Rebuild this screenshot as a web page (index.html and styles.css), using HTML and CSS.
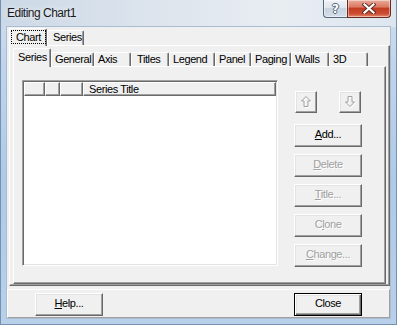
FILE: index.html
```html
<!DOCTYPE html>
<html lang="en">
<head>
<meta charset="utf-8">
<title>Editing Chart1</title>
<link rel="stylesheet" href="styles.css">
</head>
<body>
<div class="window">
  <div class="titlebar">
    <span class="title">Editing Chart1</span>
    <div class="capbtns">
      <div class="cap cap-help"><span class="qmark">?</span></div>
      <div class="cap cap-close">
        <svg width="14" height="11" viewBox="0 0 14 11" aria-hidden="true">
          <path d="M2.5 1.5 L11.5 9.5 M11.5 1.5 L2.5 9.5" stroke="#5a2a20" stroke-width="4" stroke-linecap="square" fill="none"/>
          <path d="M2.5 1.5 L11.5 9.5 M11.5 1.5 L2.5 9.5" stroke="#ffffff" stroke-width="2.2" stroke-linecap="square" fill="none"/>
        </svg>
      </div>
    </div>
  </div>
  <div class="client">
    <div class="otabs">
      <div class="tab otab-chart sel"><span class="focus">Chart</span></div>
      <div class="tab otab-series">Series</div>
    </div>
    <div class="opage">
      <div class="itabs">
        <div class="tab itab sel w-series">Series</div>
        <div class="tab itab w-general">General</div>
        <div class="tab itab w-axis">Axis</div>
        <div class="tab itab w-titles">Titles</div>
        <div class="tab itab w-legend">Legend</div>
        <div class="tab itab w-panel">Panel</div>
        <div class="tab itab w-paging">Paging</div>
        <div class="tab itab w-walls">Walls</div>
        <div class="tab itab w-3d">3D</div>
      </div>
      <div class="ipage">
        <div class="listbox">
          <div class="lb-header">
            <div class="hc hc1"></div>
            <div class="hc hc2"></div>
            <div class="hc hc3"></div>
            <div class="hc hc4">Series Title</div>
          </div>
        </div>
        <div class="side">
          <div class="arrows">
            <button class="btn arrow" disabled>
              <svg width="11" height="12" viewBox="0 0 11 12" aria-hidden="true">
                <polygon transform="translate(1,1)" points="5,0.5 9.5,5 7,5 7,10.5 3,10.5 3,5 0.5,5" fill="none" stroke="#ffffff" stroke-width="1"/>
                <polygon points="5,0.5 9.5,5 7,5 7,10.5 3,10.5 3,5 0.5,5" fill="none" stroke="#a0a0a0" stroke-width="1"/>
              </svg>
            </button>
            <button class="btn arrow" disabled>
              <svg width="11" height="12" viewBox="0 0 11 12" aria-hidden="true">
                <polygon transform="translate(1,1)" points="3,0.5 7,0.5 7,6 9.5,6 5,10.5 0.5,6 3,6" fill="none" stroke="#ffffff" stroke-width="1"/>
                <polygon points="3,0.5 7,0.5 7,6 9.5,6 5,10.5 0.5,6 3,6" fill="none" stroke="#a0a0a0" stroke-width="1"/>
              </svg>
            </button>
          </div>
          <button class="btn"><span><u>A</u>dd...</span></button>
          <button class="btn" disabled><span><u>D</u>elete</span></button>
          <button class="btn" disabled><span><u>T</u>itle...</span></button>
          <button class="btn" disabled><span>C<u>l</u>one</span></button>
          <button class="btn" disabled><span><u>C</u>hange...</span></button>
        </div>
      </div>
    </div>
    <div class="bottom">
      <button class="btn"><span><u>H</u>elp...</span></button>
      <button class="btn default"><span>Close</span></button>
    </div>
  </div>
</div>
</body>
</html>
```
FILE: styles.css
```css
* { box-sizing: border-box; }
html, body { margin: 0; padding: 0; }
body {
  width: 397px;
  height: 325px;
  overflow: hidden;
  background: #b9cfe6;
  font-family: "Liberation Sans", Arial, sans-serif;
  font-size: 11px;
  letter-spacing: -0.4px;
  color: #000;
}
.window {
  width: 397px;
  height: 325px;
  display: flex;
  flex-direction: column;
  background: linear-gradient(to bottom, #d3dfec 0, #c0d5ec 60px, #aecae8 180px, #b8d0ea 100%);
  border-left: 1px solid #7590b0;
  border-right: 1px solid #7590b0;
  border-bottom: 1px solid #7590b0;
}
.titlebar {
  height: 27px;
  flex: none;
  display: flex;
  padding-left: 6px;
  background: linear-gradient(to right, #cbd8e6 0%, #dbe3ec 35%, #e8edf2 70%, #dde6ef 100%);
}
.title {
  font-size: 12px;
  letter-spacing: -0.5px;
  line-height: 14px;
  padding-top: 6px;
  color: #1a1a1a;
  text-shadow: 0 0 6px #ffffff;
}
.capbtns {
  display: flex;
  margin-left: auto;
  margin-right: 5px;
  align-self: flex-start;
}
.cap {
  height: 18px;
  border: 1px solid #56687e;
  border-top: none;
  display: flex;
  align-items: center;
  justify-content: center;
  box-shadow: inset 0 0 0 1px rgba(255,255,255,0.45);
}
.cap-help {
  width: 24px;
  border-right: none;
  border-radius: 0 0 0 4px;
  background: linear-gradient(#eef2f7 0%, #dfe6ee 45%, #c8d3e0 50%, #d4dfeb 100%);
}
.qmark {
  font-family: "DejaVu Sans", sans-serif;
  font-weight: bold;
  font-size: 12px;
  color: #ffffff;
  letter-spacing: 0;
  text-shadow: 1px 0 #536478, -1px 0 #536478, 0 1px #536478, 0 -1px #536478;
  line-height: 12px;
}
.cap-close {
  width: 44px;
  border-radius: 0 0 4px 0;
  border-color: #6a2a1e;
  background: linear-gradient(#e9ab9b 0%, #dc7a63 40%, #c23c22 50%, #cc4d33 80%, #e2886a 100%);
}
.client {
  flex: 1;
  margin: 0 6px 6px;
  background: #f0f0f0;
  display: flex;
  flex-direction: column;
  box-shadow: 0 0 0 1px #a9bcd2;
}

/* tabs */
.tab {
  background: #f0f0f0;
  border-top: 1px solid #ffffff;
  border-left: 1px solid #ffffff;
  border-right: 1px solid #696969;
  box-shadow: inset -1px 0 #a0a0a0;
  border-radius: 2px 2px 0 0;
  line-height: 13px;
  white-space: nowrap;
}
.tab.sel {
  position: relative;
  z-index: 1;
  margin-bottom: -1px;
}
.otabs {
  height: 18px;
  flex: none;
  display: flex;
  align-items: flex-end;
  margin-left: 2px;
}
.otab-chart {
  width: 38px;
  height: 18px;
  padding: 1px 0 0 1px;
}
.focus {
  display: block;
  width: 35px;
  height: 14px;
  border: 1px dotted #000;
  padding-left: 4px;
  line-height: 12px;
}
.otab-series {
  width: 37px;
  height: 15px;
  padding-left: 5px;
}
.opage {
  height: 241px;
  flex: none;
  margin-left: 2px;
  border-top: 1px solid #ffffff;
  border-left: 1px solid #ffffff;
  border-right: 1px solid #696969;
  border-bottom: 1px solid #696969;
  box-shadow: inset -1px -1px #a0a0a0;
  padding: 2px 3px 1px 3px;
  display: flex;
  flex-direction: column;
}
.itabs {
  height: 18px;
  flex: none;
  display: flex;
  align-items: flex-end;
}
.itab {
  height: 14px;
  padding-left: 3px;
}
.itab.sel {
  height: 19px;
  padding: 2px 0 0 4px;
}
.w-series { width: 38px; }
.w-general { width: 43px; }
.w-axis { width: 37px; }
.w-titles { width: 38px; padding-left: 5px; }
.w-legend { width: 46px; }
.w-panel { width: 36px; }
.w-paging { width: 40px; }
.w-walls { width: 38px; }
.w-3d { width: 39px; }
.ipage {
  flex: 1;
  border-top: 1px solid #ffffff;
  border-left: 1px solid #ffffff;
  border-right: 1px solid #696969;
  border-bottom: 1px solid #696969;
  box-shadow: inset -1px -1px #a0a0a0;
  padding: 13px 0 0 8px;
  display: flex;
  align-items: flex-start;
}

/* list box */
.listbox {
  width: 256px;
  height: 186px;
  background: #ffffff;
  border-top: 1px solid #a0a0a0;
  border-left: 1px solid #a0a0a0;
  border-right: 1px solid #ffffff;
  border-bottom: 1px solid #ffffff;
  box-shadow: inset 1px 1px #696969, inset -1px -1px #e3e3e3;
  padding: 1px;
}
.lb-header {
  display: flex;
  height: 14px;
}
.hc {
  background: #f0f0f0;
  border-top: 1px solid #ffffff;
  border-left: 1px solid #ffffff;
  border-right: 1px solid #696969;
  border-bottom: 1px solid #696969;
  box-shadow: inset -1px -1px #a0a0a0;
  line-height: 12px;
  white-space: nowrap;
}
.hc1 { width: 21px; }
.hc2 { width: 15px; }
.hc3 { width: 23px; }
.hc4 { flex: 1; padding-left: 5px; }

/* buttons */
.side {
  width: 68px;
  margin-left: 16px;
  display: flex;
  flex-direction: column;
  gap: 7px;
}
.arrows {
  display: flex;
  justify-content: space-between;
  padding: 0 1px;
  margin-top: 11px;
  margin-bottom: 4px;
}
.btn {
  width: 68px;
  height: 23px;
  margin: 0;
  padding: 0 0 2px;
  background: #f0f0f0;
  border-top: 1px solid #ffffff;
  border-left: 1px solid #ffffff;
  border-right: 1px solid #696969;
  border-bottom: 1px solid #696969;
  border-radius: 0;
  box-shadow: inset -1px -1px #a0a0a0, inset 1px 1px #e3e3e3;
  display: flex;
  align-items: center;
  justify-content: center;
  font: inherit;
  letter-spacing: inherit;
  color: #000;
  line-height: 13px;
}
.btn:disabled {
  color: #a0a0a0;
  text-shadow: 1px 1px #ffffff;
}
.btn.arrow {
  width: 22px;
  height: 22px;
  padding: 0;
}
.btn.default {
  border: 1px solid #000;
  box-shadow: inset 1px 1px #ffffff, inset -1px -1px #696969, inset -2px -2px #a0a0a0, inset 2px 2px #e3e3e3;
}
.bottom {
  flex: 1;
  margin-top: 3px;
  border-top: 1px solid #ffffff;
  border-left: 1px solid #ffffff;
  border-right: 1px solid #a0a0a0;
  border-bottom: 1px solid #a0a0a0;
  display: flex;
  justify-content: space-between;
  align-items: flex-start;
  padding: 3px 27px 0;
}
```
